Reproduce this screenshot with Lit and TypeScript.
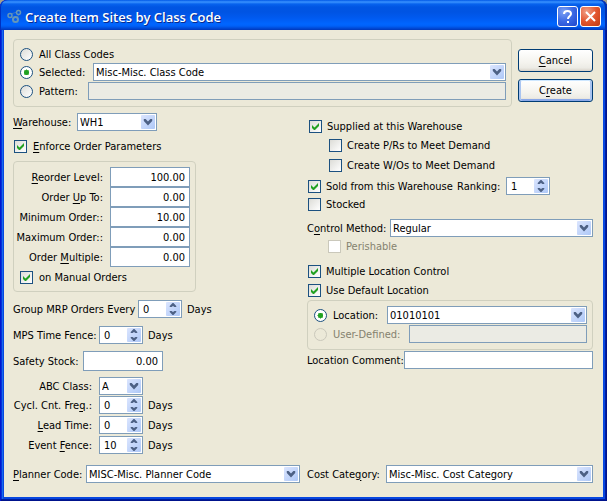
import { LitElement, html, css, svg, TemplateResult } from "lit";
import { customElement } from "lit/decorators.js";

type Label = string | TemplateResult;

@customElement("app-root")
export class AppRoot extends LitElement {
  static styles = css`
    :host {
      display: block;
      background: #a39f8c;
      color: #000;
      font: 11px/13px Tahoma, "DejaVu Sans Condensed", sans-serif;
    }
    * {
      box-sizing: border-box;
    }
    input,
    select,
    button {
      margin: 0;
      font: inherit;
      color: inherit;
    }
    u {
      text-underline-offset: 2px;
    }

    .window {
      display: flex;
      flex-direction: column;
      min-height: 100vh;
      padding: 0 4px 4px;
      border-radius: 7px 7px 0 0;
      background: #0847e0;
      box-shadow: inset 1px 0 #0019cf, inset -1px 0 #00138c, inset 0 -1px #00138c,
        inset -2px 0 #001ea0, inset 0 -2px #001ea0, inset 2px 0 #0831d9,
        inset 3px 0 #166aee;
      overflow: hidden;
    }
    .titlebar {
      display: flex;
      align-items: center;
      gap: 2px;
      height: 30px;
      margin: 0 -4px;
      padding: 3px 6px 0;
      background: linear-gradient(
        #0058e6 0,
        #3a93ff 2px,
        #0763ee 4px,
        #0055e3 7px,
        #0054e3 12px,
        #005af0 18px,
        #0066ff 24px,
        #0061f8 26px,
        #0042cc 29px,
        #0037b8 30px
      );
      border-radius: 7px 7px 0 0;
      box-shadow: inset 1px 0 #0030c0, inset -2px 0 #0030b0;
    }
    .title {
      flex: 1;
      margin: 0;
      padding-left: 1px;
      color: #fff;
      font: 600 13px/16px "Trebuchet MS", "Open Sans", sans-serif;
      text-shadow: 1px 1px #0a2a8c;
    }
    .caption {
      width: 21px;
      height: 21px;
      padding: 0;
      border: 1px solid #fff;
      border-radius: 3px;
      background: radial-gradient(circle at 30% 25%, #7ea2f4, #3a68e4 50%, #1f45cc);
    }
    .caption.close {
      background: radial-gradient(circle at 30% 25%, #f0a088, #e3562f 50%, #c03a12);
    }
    .caption svg,
    .logo {
      display: block;
    }

    .client {
      flex: 1;
      padding: 9px 10px 14px 9px;
      background: #ece9d8;
    }
    .top {
      display: flex;
      gap: 6px;
    }
    .group {
      min-width: 0;
      margin: 0;
      padding: 5px 5px 6px 6px;
      border: 1px solid #d0d0bf;
      border-radius: 4px;
    }
    .top .group {
      flex: 1;
    }
    .actions {
      display: flex;
      flex-direction: column;
      gap: 7px;
      width: 75px;
      padding-top: 10px;
    }
    .push {
      height: 23px;
      padding: 0;
      border: 1px solid #003c74;
      border-radius: 3px;
      background: linear-gradient(#fff, #f4f3ee 60%, #ecebe5 85%, #d8d2c8);
    }
    .push.default {
      box-shadow: inset 0 1px #cee7ff, inset 2px 0 #a9c4f0, inset -2px 0 #a9c4f0,
        inset 0 -2px #8aa8e8;
    }

    .columns {
      display: grid;
      grid-template-columns: 1fr 1fr;
      gap: 6px;
      margin-top: 6px;
    }
    .columns.bottom {
      margin-top: 11px;
    }
    .right {
      padding-left: 1px;
    }

    .row {
      display: flex;
      align-items: center;
      height: 18px;
    }
    .row.tall {
      height: 20px;
    }
    .row.short {
      height: 13px;
    }
    .row > label,
    .unit {
      flex: none;
      white-space: nowrap;
    }
    .s1 {
      margin-top: 1px;
    }
    .s2 {
      margin-top: 2px;
    }
    .s3 {
      margin-top: 3px;
    }
    .s5 {
      margin-top: 5px;
    }
    .s6 {
      margin-top: 6px;
    }
    .s7 {
      margin-top: 7px;
    }
    .s8 {
      margin-top: 8px;
    }
    .s9 {
      margin-top: 9px;
    }
    .s12 {
      margin-top: 12px;
    }
    .indent {
      padding-left: 21px;
    }
    .inset {
      padding-left: 1px;
    }
    .supply {
      padding-left: 1px;
    }
    .order {
      width: 183px;
      padding: 5px 5px 7px 2px;
    }
    .order .row > label {
      flex: 1;
      padding-right: 7px;
      text-align: right;
    }
    .order .choice {
      margin: 4px 0 0 4px;
    }

    .w48 {
      width: 49px;
    }
    .w54 {
      width: 54px;
    }
    .w64 {
      width: 64px;
    }
    .w70 {
      width: 70px;
    }
    .w73 {
      width: 73px;
    }
    .w76 {
      width: 76px;
    }
    .w80 {
      width: 79px;
    }
    .w84 {
      width: 83px;
    }
    .w98 {
      width: 97px;
    }
    .w125 {
      width: 125px;
    }
    .cap {
      width: 86px;
      padding-right: 7px;
      text-align: right;
    }
    .unit {
      padding-left: 5px;
    }
    .sold {
      width: 149px;
    }
    .ranking {
      width: 49px;
    }

    .choice {
      display: flex;
      align-items: center;
      gap: 6px;
      height: 13px;
      white-space: nowrap;
    }
    .right .short .choice,
    .sold .choice {
      gap: 5px;
    }
    .row > .choice {
      flex: none;
    }
    .off {
      color: #85826f;
    }
    input[type="checkbox"],
    input[type="radio"] {
      appearance: none;
      flex: none;
      width: 13px;
      height: 13px;
      border: 1px solid #1c5180;
      background: linear-gradient(135deg, #dcdcd7, #fff);
    }
    input[type="radio"] {
      border-radius: 50%;
    }
    input[type="checkbox"]:checked {
      background: url('data:image/svg+xml,<svg xmlns="http://www.w3.org/2000/svg" width="11" height="11"><path d="M2 4v3l2 2h1l4-4V2L4.500 6.500z" fill="%2321a121"/></svg>'),
        linear-gradient(135deg, #dcdcd7, #fff);
    }
    input[type="radio"]:checked {
      background: radial-gradient(circle, #21a121 0 2px, #8fd08f 3px, #fff 3px);
    }
    input:disabled[type="checkbox"] {
      border-color: #cac8bb;
      background: #fff;
    }
    input:disabled[type="radio"] {
      border-color: #cac8bb;
      background: #ece9d8;
    }

    .text {
      flex: none;
      width: 80px;
      height: 20px;
      padding: 0 4px;
      border: 1px solid #7f9db9;
      border-radius: 0;
      background: #fff;
      text-align: right;
      outline: none;
    }
    .text.line {
      flex: 1;
      min-width: 0;
      height: 18px;
      text-align: left;
    }
    .text:disabled {
      background: #ebebe4;
    }
    .field {
      position: relative;
      display: flex;
      height: 18px;
    }
    .field.grow {
      flex: 1;
      min-width: 0;
    }
    .field.small {
      width: 44px;
    }
    .field.medium {
      width: 80px;
    }
    .field select,
    .field input {
      appearance: none;
      width: 100%;
      height: 18px;
      padding: 0 18px 0 2px;
      border: 1px solid #7f9db9;
      border-radius: 0;
      background: #fff;
      outline: none;
    }
    .field input {
      padding-left: 4px;
      appearance: textfield;
    }
    .field input::-webkit-inner-spin-button {
      display: none;
    }
    .field svg {
      position: absolute;
      top: 2px;
      right: 2px;
      pointer-events: none;
    }
  `;

  private combo(id: string, value: string, size = "grow") {
    return html`<span class="field ${size}">
      <select id=${id}><option>${value}</option></select>
      ${this.knob(svg`<path d="M3 4h2l2.500 2.500L10 4h2v2L7.500 10.500 3 6z" />`)}
    </span>`;
  }

  private spin(id: string, value: string) {
    return html`<span class="field small">
      <input id=${id} type="number" .value=${value} />
      ${this.knob(
        svg`<path d="M7 1h1l3 3v1H9L7.500 4 6 5H4V4zM7 13h1l3-3V9H9l-1.500 1L6 9H4v1z" />`
      )}
    </span>`;
  }

  private knob(glyph: unknown) {
    return html`<svg width="14" height="14" viewBox="0 0 15 14" preserveAspectRatio="none">
      <defs>
        <linearGradient id="g" x1="0" y1="0" x2="1" y2="1">
          <stop offset="0" stop-color="#dbe5fe" />
          <stop offset="1" stop-color="#aec8f7" />
        </linearGradient>
      </defs>
      <rect width="15" height="14" rx="1" fill="url(#g)" />
      <g fill="#4d6185">${glyph}</g>
    </svg>`;
  }

  private check(label: Label, checked = true, disabled = false) {
    return html`<label class="choice ${disabled ? "off" : ""}">
      <input type="checkbox" .checked=${checked} ?disabled=${disabled} />
      <span>${label}</span>
    </label>`;
  }

  private radio(name: string, label: string, width = "", checked = false, disabled = false) {
    return html`<label class="choice ${disabled ? "off" : ""}">
      <input type="radio" name=${name} .checked=${checked} ?disabled=${disabled} />
      <span class=${width}>${label}</span>
    </label>`;
  }

  private amount(id: string, label: Label, value: string) {
    return html`<div class="row tall">
      <label for=${id}>${label}</label>
      <input class="text" id=${id} .value=${value} />
    </div>`;
  }

  render() {
    return html`<main class="window">
      <header class="titlebar">
        <svg class="logo" width="16" height="16" viewBox="0 0 16 16" fill="none" stroke="#6596b8">
          <path d="M5 5l6-2M5 8l3 2M13 5l-2 4" stroke="#3a76c4" />
          <circle cx="4" cy="6.500" r="2" stroke-width="1.500" />
          <circle cx="12.500" cy="3.500" r="2" stroke-width="1.500" />
          <circle cx="9.500" cy="10.500" r="2.500" stroke-width="2" />
        </svg>
        <h1 class="title">Create Item Sites by Class Code</h1>
        <button class="caption" aria-label="Help">
          <svg width="19" height="19" fill="none" stroke="#fff" stroke-width="2">
            <path d="M6 7c0-4 7-4 7 0 0 2-3 2-3 5M10 14v2" />
          </svg>
        </button>
        <button class="caption close" aria-label="Close">
          <svg width="19" height="19" stroke="#fff" stroke-width="2">
            <path d="M5 5l9 9M14 5l-9 9" />
          </svg>
        </button>
      </header>

      <div class="client">
        <div class="top">
          <fieldset class="group">
            <div class="row">${this.radio("codes", "All Class Codes")}</div>
            <div class="row">
              ${this.radio("codes", "Selected:", "w54", true)}
              ${this.combo("class-code", "Misc-Misc. Class Code")}
            </div>
            <div class="row s1">
              ${this.radio("codes", "Pattern:", "w48")}
              <input class="text line" aria-label="Pattern" disabled />
            </div>
          </fieldset>
          <div class="actions">
            <button class="push"><u>C</u>ancel</button>
            <button class="push default">C<u>r</u>eate</button>
          </div>
        </div>

        <div class="columns">
          <section>
            <div class="row">
              <label class="w64" for="warehouse"><u>W</u>arehouse:</label>
              ${this.combo("warehouse", "WH1", "medium")}
            </div>
            <div class="row short s9 inset">${this.check(html`<u>E</u>nforce Order Parameters`)}</div>
            <fieldset class="group order s8">
              ${this.amount("reorder", html`<u>R</u>eorder Level:`, "100.00")}
              ${this.amount("up-to", html`Order <u>U</u>p To:`, "0.00")}
              ${this.amount("minimum", "Minimum Order::", "10.00")}
              ${this.amount("maximum", "Maximum Order::", "0.00")}
              ${this.amount("multiple", html`Order <u>M</u>ultiple:`, "0.00")}
              ${this.check("on Manual Orders")}
            </fieldset>
            <div class="row s8">
              <label class="w125" for="mrp">Group MRP Orders Every</label>
              ${this.spin("mrp", "0")}<span class="unit">Days</span>
            </div>
            <div class="row s8">
              <label class="cap" for="mps">MPS Time Fence:</label>
              ${this.spin("mps", "0")}<span class="unit">Days</span>
            </div>
            <div class="row tall s7">
              <label class="w70" for="safety">Safety Stock:</label>
              <input class="text" id="safety" .value=${"0.00"} />
            </div>
            <div class="row s6">
              <label class="cap" for="abc">ABC Class:</label>
              ${this.combo("abc", "A", "small")}
            </div>
            <div class="row s1">
              <label class="cap" for="cycle">Cycl. Cnt. Fre<u>q</u>.:</label>
              ${this.spin("cycle", "0")}<span class="unit">Days</span>
            </div>
            <div class="row s2">
              <label class="cap" for="lead"><u>L</u>ead Time:</label>
              ${this.spin("lead", "0")}<span class="unit">Days</span>
            </div>
            <div class="row s2">
              <label class="cap" for="fence">Event <u>F</u>ence:</label>
              ${this.spin("fence", "10")}<span class="unit">Days</span>
            </div>
          </section>

          <section class="right">
            <div class="supply">
              <div class="row short s7 inset">${this.check("Supplied at this Warehouse")}</div>
              <div class="row short s6 indent">${this.check("Create P/Rs to Meet Demand", false)}</div>
              <div class="row short s7 indent">${this.check("Create W/Os to Meet Demand", false)}</div>
            </div>
            <div class="row s5 inset">
              <span class="sold">${this.check("Sold from this Warehouse")}</span>
              <label class="ranking" for="ranking">Ranking:</label>
              ${this.spin("ranking", "1")}
            </div>
            <div class="row short s3 inset">${this.check("Stocked", false)}</div>
            <div class="row s8">
              <label class="w84" for="control">C<u>o</u>ntrol Method:</label>
              ${this.combo("control", "Regular")}
            </div>
            <div class="row short s3 indent">${this.check("Perishable", false, true)}</div>
            <div class="row short s12 inset">${this.check("Multiple Location Control")}</div>
            <div class="row short s6 inset">${this.check("Use Default Location")}</div>
            <fieldset class="group s3">
              <div class="row">
                ${this.radio("location", "Location:", "w54", true)}
                ${this.combo("location", "01010101")}
              </div>
              <div class="row s1">
                ${this.radio("location", "User-Defined:", "w76", false, true)}
                <input class="text line" aria-label="User-Defined" disabled />
              </div>
            </fieldset>
            <div class="row s1">
              <label class="w98" for="comment">Location Comment:</label>
              <input class="text line" id="comment" />
            </div>
          </section>
        </div>

        <div class="columns bottom">
          <div class="row">
            <label class="w73" for="planner"><u>P</u>lanner Code:</label>
            ${this.combo("planner", "MISC-Misc. Planner Code")}
          </div>
          <div class="row right">
            <label class="w80" for="cost">Cost Cate<u>g</u>ory:</label>
            ${this.combo("cost", "Misc-Misc. Cost Category")}
          </div>
        </div>
      </div>
    </main>`;
  }
}
